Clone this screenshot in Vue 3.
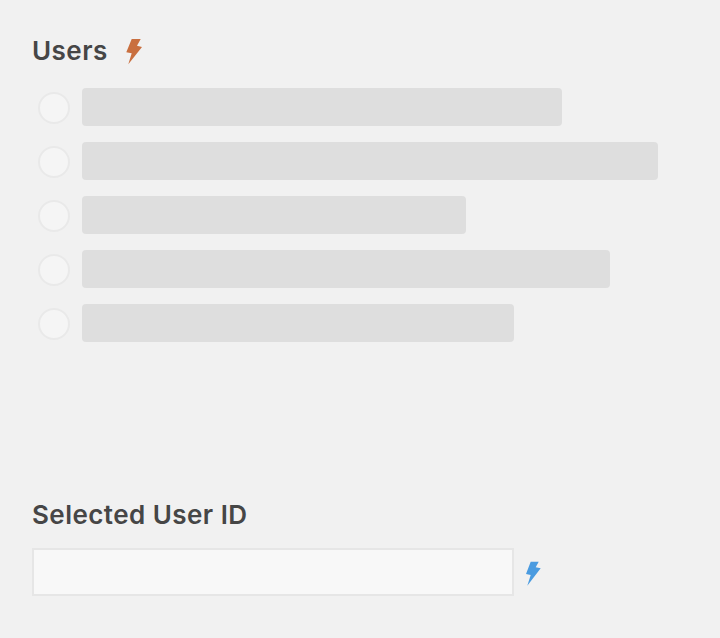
<script setup>
const bars = [480, 576, 384, 528, 432]
</script>

<template>
  <div class="page">
    <section class="users">
      <h2 class="title users-title">
        Users
        <svg class="bolt orange" width="18" height="27" viewBox="0 0 18 27">
          <path d="M5.7 1H14.7L11 7.7L16 9L2.3 26.3L5.7 15.3L.3 14.3Z" />
        </svg>
      </h2>
      <ul class="list">
        <li v-for="w in bars" :key="w" class="row">
          <span class="radio"></span>
          <span class="bar" :style="{ width: w + 'px' }"></span>
        </li>
      </ul>
    </section>
    <section class="selected">
      <h2 class="title">Selected User ID</h2>
      <div class="field">
        <input class="input" type="text" />
        <svg class="bolt blue" width="16" height="26" viewBox="0 0 16 26">
          <path d="M5.7 .7H13.7L10.7 6.3L15.7 7.3L2.3 24.7L5.7 14L1 13Z" />
        </svg>
      </div>
    </section>
  </div>
</template>

<style>
html, body { margin: 0; background: #f1f1f1; }
</style>

<style scoped>
.page {
  width: 720px;
  height: 638px;
  box-sizing: border-box;
  padding: 36px 0 0 32px;
  background: #f1f1f1;
  font-family: Inter, "Liberation Sans", sans-serif;
  overflow: hidden;
}
.users { height: 464px; }
.title {
  margin: 0;
  font-size: 26px;
  line-height: 30px;
  font-weight: 600;
  letter-spacing: .45px;
  color: #464646;
}
.users-title { display: flex; align-items: center; gap: 18px; }
.bolt { display: block; flex: none; }
.orange path { fill: #c96f3f; }
.blue { align-self: flex-start; margin-top: 13px; }
.blue path { fill: #4a9be0; }
.list {
  list-style: none;
  margin: 22px 0 0;
  padding: 0 0 0 6px;
  display: flex;
  flex-direction: column;
  gap: 16px;
}
.row { display: flex; align-items: flex-start; gap: 12px; height: 38px; }
.radio {
  width: 32px;
  height: 32px;
  margin-top: 4px;
  box-sizing: border-box;
  border: 2px solid #e9e9e9;
  border-radius: 50%;
  background: #f5f5f5;
}
.bar { height: 38px; border-radius: 4px; background: #dedede; }
.field { display: flex; align-items: center; gap: 11px; margin-top: 18px; }
.input {
  width: 482px;
  height: 48px;
  box-sizing: border-box;
  border: 2px solid #e6e6e6;
  background: #f8f8f8;
  padding: 0;
  outline: none;
  border-radius: 0;
}
</style>
